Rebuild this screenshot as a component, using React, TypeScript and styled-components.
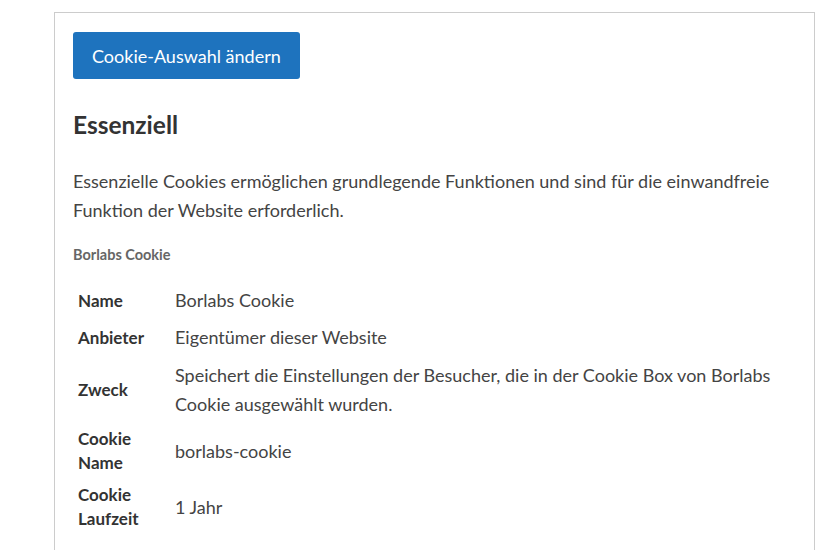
import styled, { createGlobalStyle } from "styled-components";

const GlobalStyle = createGlobalStyle`
  body {
    margin: 0;
    background: #fff;
    font-family: Lato, "Open Sans", sans-serif;
    color: #444;
  }
`;

const Panel = styled.section`
  margin: 12px 0 0 54px;
  width: 761px;
  box-sizing: border-box;
  border: 1px solid #ccc;
  border-bottom: none;
  padding: 19px 19px 30px 18px;
`;

const ChangeButton = styled.button`
  height: 47px;
  padding: 0 19px;
  border: none;
  border-radius: 3px;
  background: #1e73be;
  color: #fff;
  font-family: Lato, sans-serif;
  font-size: 18px;
  cursor: pointer;
`;

const Title = styled.h3`
  margin: 31px 0 0;
  font-size: 24.5px;
  line-height: 30px;
  font-weight: 700;
  color: #333;
`;

const Text = styled.p`
  margin: 27px 0 0;
  font-size: 18px;
  line-height: 29px;
`;

const ServiceName = styled.h4`
  margin: 20px 0 0;
  font-size: 14.5px;
  line-height: 20px;
  font-weight: 700;
  color: #666;
`;

const InfoTable = styled.table`
  margin-top: 17px;
  width: 100%;
  border-collapse: collapse;
`;

const Label = styled.th`
  width: 87px;
  padding: 4px 5px;
  text-align: left;
  vertical-align: middle;
  font-size: 17px;
  line-height: 24px;
  font-weight: 700;
  color: #333;
`;

const Value = styled.td<{ $wide?: boolean }>`
  padding: ${(p) => (p.$wide ? "5px 5px 4px" : "4px 5px")};
  font-size: 18px;
  line-height: 29px;
`;

const rows: [string, string][] = [
  ["Name", "Borlabs Cookie"],
  ["Anbieter", "Eigentümer dieser Website"],
  [
    "Zweck",
    "Speichert die Einstellungen der Besucher, die in der Cookie Box von Borlabs Cookie ausgewählt wurden.",
  ],
  ["Cookie Name", "borlabs-cookie"],
  ["Cookie Laufzeit", "1 Jahr"],
];

export default function App() {
  return (
    <>
      <GlobalStyle />
      <Panel>
        <ChangeButton>Cookie-Auswahl ändern</ChangeButton>
        <Title>Essenziell</Title>
        <Text>
          Essenzielle Cookies ermöglichen grundlegende Funktionen und sind für
          die einwandfreie Funktion der Website erforderlich.
        </Text>
        <ServiceName>Borlabs Cookie</ServiceName>
        <InfoTable>
          <tbody>
            {rows.map(([label, value]) => (
              <tr key={label}>
                <Label>{label}</Label>
                <Value $wide={value.length > 60}>{value}</Value>
              </tr>
            ))}
          </tbody>
        </InfoTable>
      </Panel>
    </>
  );
}
